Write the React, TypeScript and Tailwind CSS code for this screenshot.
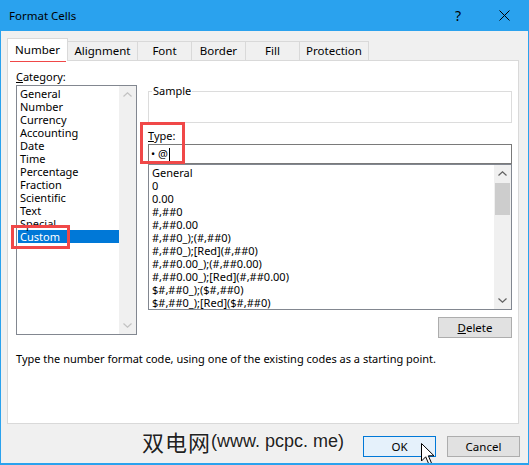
import React from "react";

const categories = [
  "General",
  "Number",
  "Currency",
  "Accounting",
  "Date",
  "Time",
  "Percentage",
  "Fraction",
  "Scientific",
  "Text",
  "Special",
  "Custom",
];

const formats = [
  "General",
  "0",
  "0.00",
  "#,##0",
  "#,##0.00",
  "#,##0_);(#,##0)",
  "#,##0_);[Red](#,##0)",
  "#,##0.00_);(#,##0.00)",
  "#,##0.00_);[Red](#,##0.00)",
  "$#,##0_);($#,##0)",
  "$#,##0_);[Red]($#,##0)",
];

const tabs = [
  { label: "Alignment", w: "w-[70px]" },
  { label: "Font", w: "w-[54px]" },
  { label: "Border", w: "w-[54px]" },
  { label: "Fill", w: "w-[54px]" },
  { label: "Protection", w: "w-[69px]" },
];

function Chevron({ up, color }: { up?: boolean; color: string }) {
  return (
    <svg width="9" height="5" viewBox="0 0 9 5" fill="none">
      <polyline
        points={up ? "0.5,4.5 4.5,0.8 8.5,4.5" : "0.5,0.5 4.5,4.2 8.5,0.5"}
        stroke={color}
        strokeWidth="1.2"
      />
    </svg>
  );
}

// 세로 스크롤바 (위/아래 화살표 + 선택적 썸)
function ScrollBar({ disabled }: { disabled?: boolean }) {
  const color = disabled ? "#c2c2c2" : "#606060";
  return (
    <div className="w-[17px] h-full bg-[#f0f0f0] flex flex-col">
      <div className="h-[17px] flex items-center justify-center">
        <Chevron up color={color} />
      </div>
      {!disabled && <div className="h-[32px] mx-px mt-px bg-[#cdcdcd]" />}
      <div className="flex-1" />
      <div className="h-[17px] flex items-center justify-center">
        <Chevron color={color} />
      </div>
    </div>
  );
}

function RedBox({ className }: { className: string }) {
  return <div className={`absolute border-[3px] border-[#f04848] pointer-events-none ${className}`} />;
}

export default function App() {
  return (
    <div className="relative w-[529px] h-[465px] bg-[#f0f0f0] border-l border-r border-b-2 border-[#2aa2ee] overflow-hidden font-['Noto_Sans','Open_Sans',sans-serif] text-[11px] text-black">
      {/* 제목 표시줄 */}
      <div className="h-[31px] bg-[#2aa2ee] flex items-center pl-[8px]">
        <span className="text-[11.5px]">Format Cells</span>
        <span className="ml-auto mr-[38px] text-[14px]">?</span>
        <svg width="11" height="11" viewBox="0 0 11 11" className="mr-[18px]">
          <path d="M0.5 0.5 L10.5 10.5 M10.5 0.5 L0.5 10.5" stroke="#000" strokeWidth="1" />
        </svg>
      </div>

      <div className="pl-[6px] pt-[7px]">
        {/* 탭 */}
        <div className="flex items-end h-[22px]">
          <div className="relative z-10 w-[61px] h-[23px] -mb-px bg-white border-l border-t border-r border-[#d9d9d9] flex items-center justify-center text-[11.5px]">
            Number
          </div>
          {tabs.map((t) => (
            <div
              key={t.label}
              className={`${t.w} h-[19px] border-t border-r border-[#d9d9d9] flex items-center justify-center text-[11.5px]`}
            >
              {t.label}
            </div>
          ))}
        </div>

        {/* 본문 패널 */}
        <div className="w-[512px] h-[364px] bg-white border border-[#d9d9d9] pl-[8px] pr-[6px] pt-[8px]">
          <div className="flex gap-[11px]">
            {/* 카테고리 */}
            <div className="w-[121px] flex flex-col">
              <div className="h-[16px] leading-[16px]">
                <span className="underline">C</span>ategory:
              </div>
              <div className="h-[250px] border border-[#828790] flex">
                <div className="flex-1 pl-px pt-px">
                  {categories.map((c) => (
                    <div
                      key={c}
                      className={`h-[13px] leading-[13px] px-[2px] ${
                        c === "Custom" ? "bg-[#0078d7] text-white" : ""
                      }`}
                    >
                      {c}
                    </div>
                  ))}
                </div>
                <ScrollBar disabled />
              </div>
            </div>

            {/* 샘플 / 형식 */}
            <div className="w-[364px] flex flex-col">
              <fieldset className="mt-[14px] h-[40px] border border-[#dcdcdc]">
                <legend className="ml-[3px] px-px leading-[16px]">Sample</legend>
              </fieldset>
              <div className="mt-[5px] h-[16px] leading-[16px]">
                <span className="underline">T</span>ype:
              </div>
              <div className="h-[20px] border border-[#7a7a7a] pl-[2px] flex items-center">
                <span>• @</span>
                <span className="ml-px w-px h-[13px] bg-black" />
              </div>
              <div className="h-[146px] border border-[#828790] flex">
                <div className="flex-1 pl-[3px] pt-px">
                  {formats.map((f) => (
                    <div key={f} className="h-[13px] leading-[13px] whitespace-nowrap">
                      {f}
                    </div>
                  ))}
                </div>
                <ScrollBar />
              </div>
              <button className="self-end mt-[7px] w-[74px] h-[21px] bg-[#e1e1e1] border border-[#adadad] text-[11.5px]">
                <span className="underline">D</span>elete
              </button>
            </div>
          </div>
          <p className="mt-[13px] leading-[16px]">
            Type the number format code, using one of the existing codes as a starting point.
          </p>
        </div>

        {/* 하단 버튼 */}
        <div className="flex justify-end gap-[11px] pt-[12px] pr-[8px]">
          <button className="w-[73px] h-[21px] bg-[#e5f1fb] border border-[#0078d7] text-[11.5px]">OK</button>
          <button className="w-[73px] h-[21px] bg-[#e1e1e1] border border-[#adadad] text-[11.5px]">Cancel</button>
        </div>
      </div>

      {/* 강조 표시 */}
      <RedBox className="left-[9px] top-[41px] w-[56px] h-[21px]" />
      <RedBox className="left-[10px] top-[225px] w-[59px] h-[24px]" />
      <RedBox className="left-[139px] top-[122px] w-[45px] h-[42px]" />

      {/* 워터마크 */}
      <div className="absolute left-[141px] top-[428px] flex items-center whitespace-nowrap text-[#222] [text-shadow:0_0_2px_#fff]">
        <span className="text-[22px] leading-[26px] tracking-[1px] font-['Noto_Sans_CJK_SC',sans-serif]">双电网</span>
        <span className="text-[18px] leading-[26px] font-['Liberation_Sans',sans-serif]">(www. pcpc. me)</span>
      </div>

      {/* 마우스 커서 */}
      <svg className="absolute left-[420px] top-[443px]" width="14" height="23" viewBox="0 0 14 23">
        <path
          d="M0.5 0.5 L0.5 18 L4.7 13.8 L8 21.5 L10.6 20.4 L7.4 12.8 L13 12.8 Z"
          fill="#fff"
          stroke="#000"
          strokeWidth="1"
          strokeLinejoin="miter"
        />
      </svg>
    </div>
  );
}
